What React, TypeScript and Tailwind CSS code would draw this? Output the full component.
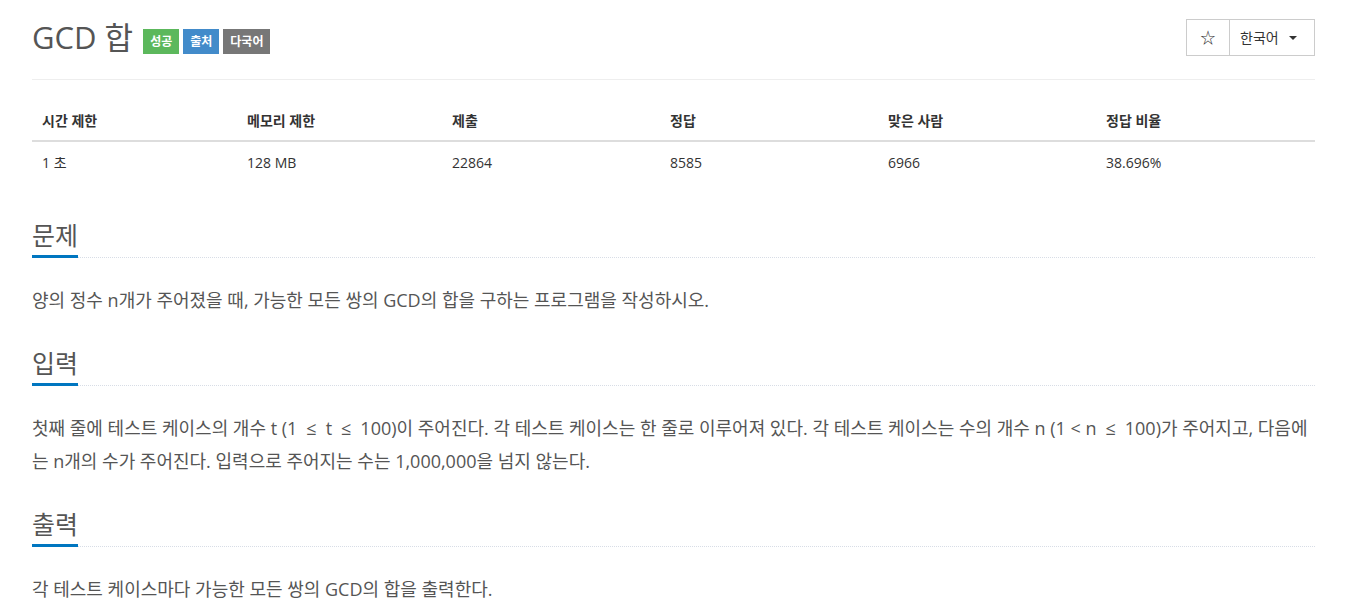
const labels = [
  { text: '성공', cls: 'bg-[#5cb85c]' },
  { text: '출처', cls: 'bg-[#428bca]' },
  { text: '다국어', cls: 'bg-[#777777]' },
]

const columns = [
  { head: '시간 제한', value: '1 초', w: 'w-[205px]' },
  { head: '메모리 제한', value: '128 MB', w: 'w-[205px]' },
  { head: '제출', value: '22864', w: 'w-[218px]' },
  { head: '정답', value: '8585', w: 'w-[218px]' },
  { head: '맞은 사람', value: '6966', w: 'w-[218px]' },
  { head: '정답 비율', value: '38.696%', w: 'flex-1' },
]

// en spaces around ≤, the original sets the math a little wider
const sections = [
  {
    title: '문제',
    body: '양의 정수 n개가 주어졌을 때, 가능한 모든 쌍의 GCD의 합을 구하는 프로그램을 작성하시오.',
  },
  {
    title: '입력',
    body: '첫째 줄에 테스트 케이스의 개수 t (1\u2002≤\u2002t\u2002≤\u2002100)이 주어진다. 각 테스트 케이스는 한 줄로 이루어져 있다. 각 테스트 케이스는 수의 개수 n (1 < n\u2002≤\u2002100)가 주어지고, 다음에는 n개의 수가 주어진다. 입력으로 주어지는 수는 1,000,000을 넘지 않는다.',
  },
  {
    title: '출력',
    body: '각 테스트 케이스마다 가능한 모든 쌍의 GCD의 합을 출력한다.',
  },
]

function SectionHeader({ title }: { title: string }) {
  return (
    <div className="mt-[14px]">
      <h2 className="h-[40px] text-[25px] font-normal leading-[40px] text-[#555]">{title}</h2>
      <div className="flex h-[3px] items-end">
        <div className="h-[3px] w-[46px] bg-[#0076c0]" />
        <div className="flex-1 border-b border-dotted border-[#d8dde6]" />
      </div>
    </div>
  )
}

export default function App() {
  return (
    <div
      className="min-h-screen bg-white pl-[32px] pr-[36px] text-[#555]"
      style={{ fontFamily: '"Open Sans", "Noto Sans CJK KR", sans-serif' }}
    >
      {/* Title bar */}
      <header className="flex items-start justify-between border-b border-[#eeeeee] pt-[19px] pb-[23px]">
        <div className="flex items-end gap-[10px]">
          <h1 className="text-[31px] font-normal leading-[36px] text-[#555]">GCD 합</h1>
          <div className="mb-[1px] flex gap-[4px]">
            {labels.map((l) => (
              <span
                className={`${l.cls} flex h-[25px] items-center px-[7px] text-[12px] font-bold text-white`}
                key={l.text}
              >
                {l.text}
              </span>
            ))}
          </div>
        </div>
        <div className="flex h-[37px] border border-[#cccccc] text-[14px] text-[#333]">
          <button className="flex w-[43px] items-center justify-center border-r border-[#cccccc] text-[15px]">☆</button>
          <button className="flex w-[84px] items-center gap-[10px] pl-[10px]">
            한국어
            <span className="h-0 w-0 border-x-[4px] border-t-[4px] border-x-transparent border-t-[#333]" />
          </button>
        </div>
      </header>

      {/* Stats table */}
      <div className="mt-[20px] mb-[33px] text-[14px]">
        <div className="flex h-[42px] items-center border-b-2 border-[#dddddd] font-bold text-[#333]">
          {columns.map((c) => (
            <div className={`${c.w} px-[10px]`} key={c.head}>{c.head}</div>
          ))}
        </div>
        <div className="flex h-[40px] items-center text-[#333]">
          {columns.map((c) => (
            <div className={`${c.w} px-[10px]`} key={c.head}>{c.value}</div>
          ))}
        </div>
      </div>

      {/* Problem sections */}
      {sections.map((s) => (
        <section className="mb-[26px]" key={s.title}>
          <SectionHeader title={s.title} />
          <p className="mt-[26px] text-[18px] leading-[33px] text-[#555]">{s.body}</p>
        </section>
      ))}
    </div>
  )
}
